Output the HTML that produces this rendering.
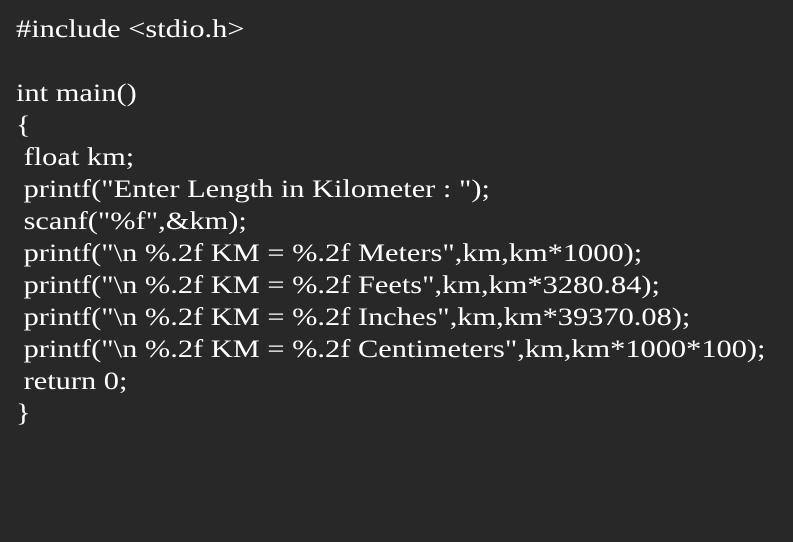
<!DOCTYPE html>
<html><head><style>
html,body{margin:0;padding:0;background:#282828;width:793px;height:542px;overflow:hidden}
pre{margin:0;position:absolute;left:16px;top:14px;font-family:"Liberation Serif",serif;font-size:25px;line-height:32px;color:#fff;transform:scaleX(1.216);transform-origin:0 0}
</style></head><body>
<pre>#include &lt;stdio.h&gt;

int main()
{
 float km;
 printf("Enter Length in Kilometer : ");
 scanf("%f",&amp;km);
 printf("\n %.2f KM = %.2f Meters",km,km*1000);
 printf("\n %.2f KM = %.2f Feets",km,km*3280.84);
 printf("\n %.2f KM = %.2f Inches",km,km*39370.08);
 printf("\n %.2f KM = %.2f Centimeters",km,km*1000*100);
 return 0;
}</pre>
</body></html>
